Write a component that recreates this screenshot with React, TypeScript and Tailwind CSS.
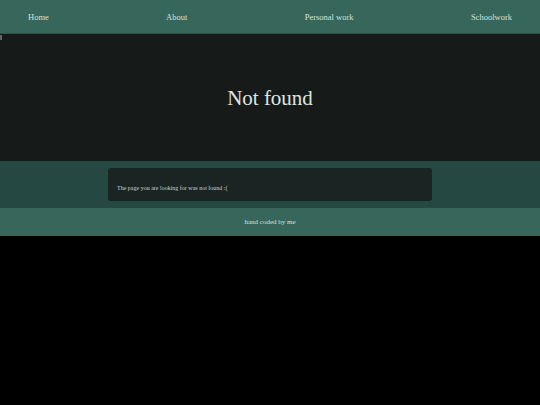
export default function App() {
  const links = ['Home', 'About', 'Personal work', 'Schoolwork'];

  return (
    <div className="min-h-[405px] bg-black" style={{ fontFamily: '"Liberation Serif", serif' }}>
      {/* Nav */}
      <nav className="h-[34px] bg-[#37675b] border-b border-[#2c5249] flex items-center justify-between px-[28px] pt-[2px]">
        {links.map((l) => (
          <a key={l} className="text-[8.5px] text-[#d3e2dc]">
            {l}
          </a>
        ))}
      </nav>

      {/* Hero */}
      <section className="relative h-[127px] bg-[#161b1a] flex items-center justify-center">
        <span className="absolute left-0 top-[1px] w-[2px] h-[5px] bg-[#5d6664]" />
        <h1 className="text-[21px] text-[#dde6e2] mt-[2px]">Not found</h1>
      </section>

      {/* Message */}
      <section className="bg-[#264842] py-[7px] flex justify-center">
        <div className="w-[324px] h-[33px] bg-[#1a2422] rounded-[3px] flex items-center px-[9px] pt-[7px]">
          <p className="text-[6px] text-[#c9d4d0]">The page you are looking for was not found :(</p>
        </div>
      </section>

      {/* Footer */}
      <footer className="h-[28px] bg-[#37675b] flex items-center justify-center">
        <span className="text-[7px] text-[#d3e2dc]">hand coded by me</span>
      </footer>
    </div>
  );
}
